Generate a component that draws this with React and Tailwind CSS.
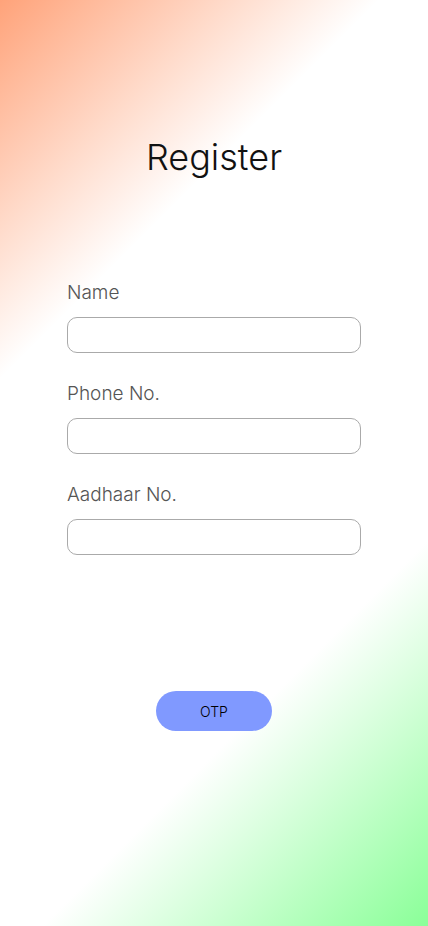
export default function App() {
  const fields = ["Name", "Phone No.", "Aadhaar No."];
  return (
    <div className="min-h-[926px] w-full bg-[linear-gradient(135deg,#ffa37a_0%,#ffffff_28%,#ffffff_71.5%,#8aff98_100%)] font-['Inter',sans-serif]">
      <div className="mx-auto flex w-[294px] flex-col pt-[131px]">
        <h1 className="text-center text-[36px] font-light leading-[52px] text-[#111]">
          Register
        </h1>
        <div className="mt-[99px] flex flex-col gap-[30px]">
          {fields.map((f) => (
            <div key={f} className="flex flex-col">
              <label className="mb-[13px] text-[19px] font-light leading-[22px] text-[#555]">{f}</label>
              <input
                type="text"
                className="h-[36px] w-full rounded-[10px] border border-[#aaa] bg-white px-3 outline-none"
              />
            </div>
          ))}
        </div>
        <div className="mt-[136px] flex justify-center">
          <button className="h-[40px] w-[116px] rounded-full bg-[#8099ff] text-[14px] font-light text-black">
            OTP
          </button>
        </div>
      </div>
    </div>
  );
}
